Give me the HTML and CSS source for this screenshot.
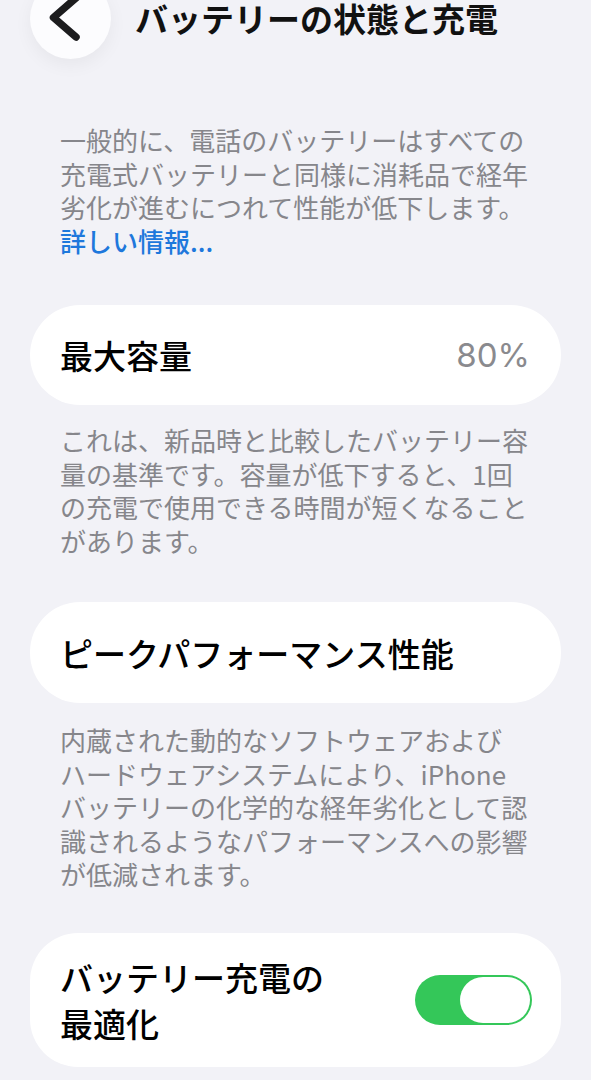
FILE: index.html
```html
<!DOCTYPE html>
<html lang="ja">
<head>
<meta charset="utf-8">
<title>バッテリーの状態と充電</title>
<link rel="stylesheet" href="styles.css">
</head>
<body>
<div class="screen">
  <header class="header">
    <div class="back">
      <svg class="chev" width="81" height="81" viewBox="0 0 81 81">
        <path d="M46 20 L23.5 39.5 L46 59" fill="none" stroke="#1c1c1e" stroke-width="7.5" stroke-linecap="round" stroke-linejoin="round"/>
      </svg>
    </div>
    <h1 class="title">バッテリーの状態と充電</h1>
  </header>

  <p class="note note-first">一般的に、電話のバッテリーはすべての<br>充電式バッテリーと同様に消耗品で経年<br>劣化が進むにつれて性能が低下します。<br><a class="link">詳しい情報...</a></p>

  <div class="card card-cap">
    <span class="label">最大容量</span>
    <span class="value">80%</span>
  </div>

  <p class="note note-2">これは、新品時と比較したバッテリー容<br>量の基準です。容量が低下すると、1回<br>の充電で使用できる時間が短くなること<br>があります。</p>

  <div class="card card-peak">
    <span class="label">ピークパフォーマンス性能</span>
  </div>

  <p class="note note-3">内蔵された動的なソフトウェアおよび<br>ハードウェアシステムにより、iPhone<br>バッテリーの化学的な経年劣化として認<br>識されるようなパフォーマンスへの影響<br>が低減されます。</p>

  <div class="card card-opt">
    <span class="label label-2">バッテリー充電の<br>最適化</span>
    <div class="toggle"><div class="knob"></div></div>
  </div>
</div>
</body>
</html>
```

FILE: styles.css
```css
html, body {
  margin: 0;
  padding: 0;
  background: #f2f2f7;
}
body {
  font-family: "Noto Sans CJK JP", "Noto Sans", sans-serif;
  width: 591px;
  height: 1080px;
  overflow: hidden;
}
.screen {
  display: flex;
  flex-direction: column;
}
.header {
  display: flex;
  align-items: center;
  height: 81px;
  margin-top: -22px;
  padding-left: 30px;
}
.back {
  width: 81px;
  height: 81px;
  flex: none;
  border-radius: 50%;
  background: #fcfcfe;
  box-shadow: 0 6px 18px rgba(0, 0, 0, 0.05);
}
.chev {
  display: block;
}
.title {
  margin: 0 0 0 24px;
  font-size: 33px;
  font-weight: 700;
  line-height: 1;
  color: #111111;
  white-space: nowrap;
}
.note {
  margin: 0 30px;
  padding: 0 30px;
  font-size: 26px;
  line-height: 33.5px;
  color: #86868b;
  white-space: nowrap;
}
.note-first { margin-top: 64px; }
.note-2 { margin-top: 18px; }
.note-3 { margin-top: 20px; }
.link {
  color: #1e78dc;
  font-weight: 500;
}
.card {
  margin: 0 30px;
  background: #ffffff;
  display: flex;
  align-items: center;
  justify-content: space-between;
  box-sizing: border-box;
  padding: 0 31px 0 30px;
}
.card-cap {
  margin-top: 48px;
  height: 100px;
  border-radius: 50px;
}
.card-peak {
  margin-top: 45px;
  height: 101px;
  border-radius: 50px;
}
.card-opt {
  margin-top: 42px;
  height: 134px;
  border-radius: 48px;
  padding-right: 29px;
}
.label {
  font-size: 33px;
  font-weight: 500;
  line-height: 46px;
  color: #000000;
  white-space: nowrap;
}
.value {
  font-family: "Inter", "Noto Sans", sans-serif;
  font-size: 33px;
  font-weight: 400;
  color: #8a8a8e;
  line-height: 46px;
}
.toggle {
  width: 117px;
  height: 50px;
  border-radius: 25px;
  background: #34c759;
  display: flex;
  justify-content: flex-end;
  align-items: center;
  padding: 0 2px;
  box-sizing: border-box;
}
.knob {
  width: 70px;
  height: 46px;
  border-radius: 23px;
  background: #ffffff;
}
```
